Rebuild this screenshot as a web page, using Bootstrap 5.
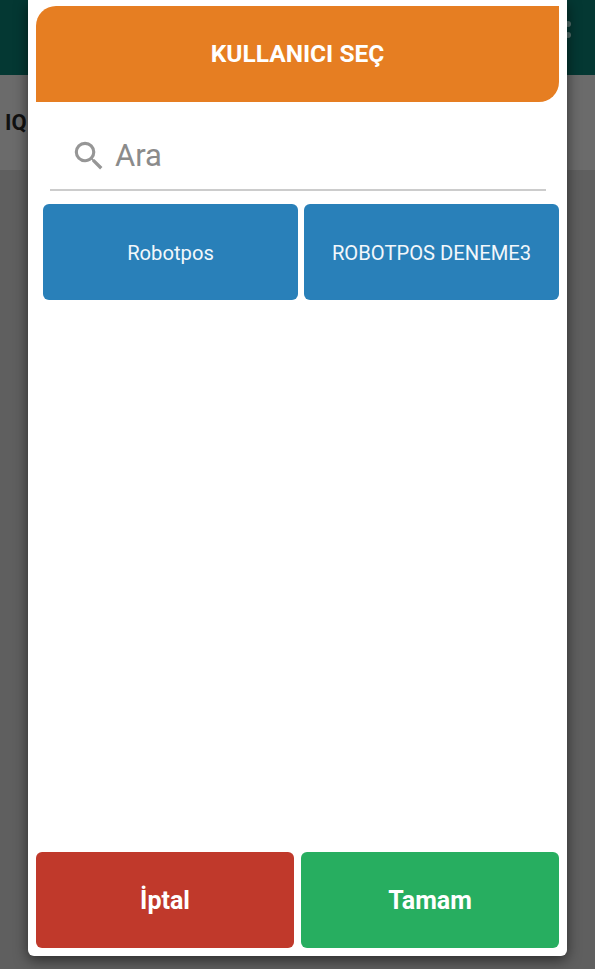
<!DOCTYPE html>
<html lang="tr">
<head>
<meta charset="utf-8">
<title>Kullanıcı Seç</title>
<link href="https://cdn.jsdelivr.net/npm/bootstrap@5.3.0/dist/css/bootstrap.min.css" rel="stylesheet">
<style>
html,body{height:100%;overflow:hidden;}
body{font-family:Roboto,"Liberation Sans",sans-serif;background:#5f5f5f;}
.stage{height:969px;}
.app-bar{height:75px;background:#043833;}
.app-sub{height:95px;background:#6b6b6b;color:#111;font-size:22px;font-weight:700;padding-left:5px;}
.bar-dots{position:absolute;top:21px;right:24px;gap:5px;}
.bar-dots i{display:block;width:6px;height:6px;border-radius:50%;background:#55706d;}
.sheet{position:absolute;left:28px;top:0;width:539px;height:956px;background:#fff;border-radius:0 0 6px 6px;box-shadow:0 4px 14px rgba(0,0,0,.55);padding:6px 8px 8px;}
.sheet-head{height:96px;background:#e67e22;color:#fff;font-size:24.5px;font-weight:700;border-radius:20px 0 20px 0;}
.search-row{height:89px;margin:0 13px 0 14px;border-bottom:2px solid #ccc;padding:21px 0 0 20px;gap:7px;color:#8b8b8b;font-size:31px;}
.user-grid{display:grid;grid-template-columns:1fr 1fr;gap:6px;margin:13px 0 0 7px;}
.user-btn{height:96px;background:#2980b9;color:#f2f7fb;font-size:20.2px;border:0;border-radius:6px;padding-top:3px;}
.foot-btn{height:96px;width:258px;color:#fff;font-size:25px;font-weight:700;border:0;border-radius:6px;padding-top:3px;}
.btn-red{background:#c0392b;}
.btn-green{background:#27ae60;}
</style>
</head>
<body>
<div class="stage position-relative">
  <div class="app-bar"></div>
  <div class="app-sub d-flex align-items-center">IQ</div>
  <div class="bar-dots d-flex flex-column"><i></i><i></i></div>
  <div class="sheet d-flex flex-column">
    <div class="sheet-head d-flex align-items-center justify-content-center">KULLANICI SEÇ</div>
    <div class="search-row d-flex align-items-center">
      <svg width="38" height="38" viewBox="0 0 24 24" fill="#969696"><path d="M15.5 14h-.79l-.28-.27A6.47 6.47 0 0 0 16 9.5 6.5 6.5 0 1 0 9.5 16c1.61 0 3.09-.59 4.23-1.57l.27.28v.79l5 4.99L20.49 19l-4.99-5zm-6 0C7.01 14 5 11.99 5 9.5S7.01 5 9.5 5 14 7.01 14 9.5 11.99 14 9.5 14z"/></svg>
      <span>Ara</span>
    </div>
    <div class="user-grid">
      <button class="user-btn" type="button">Robotpos</button>
      <button class="user-btn" type="button">ROBOTPOS DENEME3</button>
    </div>
    <div class="d-flex justify-content-between mt-auto">
      <button class="foot-btn btn-red" type="button">İptal</button>
      <button class="foot-btn btn-green" type="button">Tamam</button>
    </div>
  </div>
</div>
</body>
</html>
